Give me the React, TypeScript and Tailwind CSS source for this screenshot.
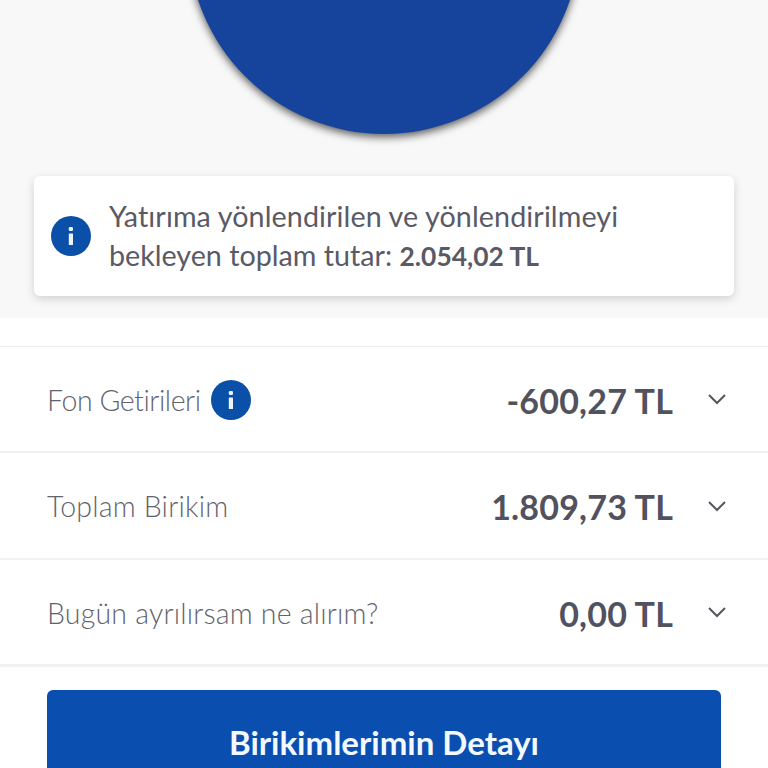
const FONT = "font-['Lato','Noto_Sans',sans-serif]";

function InfoDot({ size }: { size: string }) {
  return (
    <span className={`flex shrink-0 items-center justify-center rounded-full bg-[#0a4fa8] ${size}`}>
      <svg width="8" height="20" viewBox="0 0 8 20" fill="#eaf4ff">
        <rect x="1.8" y="1" width="4.2" height="4" rx="1.2" />
        <rect x="1.8" y="7.5" width="4.2" height="11.5" rx="0.6" />
      </svg>
    </span>
  );
}

function Chevron() {
  return (
    <svg width="18" height="12" viewBox="0 0 18 12" fill="none" stroke="#55555f" strokeWidth="2" className="ml-[35px] mr-[42px] shrink-0">
      <path d="M1 2l8 8 8-8" />
    </svg>
  );
}

const ROWS = [
  { label: 'Fon Getirileri', value: '-600,27 TL', info: true, height: 'h-[106px]', tracking: 'tracking-[-0.45px]', nudge: 'pt-[2px]' },
  { label: 'Toplam Birikim', value: '1.809,73 TL', info: false, height: 'h-[107px]', tracking: 'tracking-[0.2px]', nudge: 'pt-[2px]' },
  { label: 'Bugün ayrılırsam ne alırım?', value: '0,00 TL', info: false, height: 'h-[107px]', tracking: 'tracking-[0.2px]', nudge: 'pt-[3px]' }
];

export default function App() {
  return (
    <div className={`h-[768px] w-[768px] overflow-hidden bg-white ${FONT}`}>
      <section className="flow-root h-[318px] bg-[#f8f8f8]">
        <div className="mx-auto mt-[-258px] mb-[42px] h-[392px] w-[392px] rounded-full bg-[#16439b] shadow-[0_3px_8px_rgba(0,0,0,0.65)]" />
        <div className="mx-[34px] flex h-[120px] items-center gap-[18px] rounded-md bg-white pl-[17px] shadow-[0_3px_10px_rgba(0,0,0,0.16)]">
          <InfoDot size="h-10 w-10" />
          <p className="text-[28.7px] leading-[39px] tracking-[0.1px] text-[#5a5a66]">
            Yatırıma yönlendirilen ve yönlendirilmeyi
            <br />
            <span className="tracking-[0px]">bekleyen toplam tutar: </span>
            <b className="text-[26.4px] font-bold tracking-[0px]">2.054,02 TL</b>
          </p>
        </div>
      </section>

      <div className="h-[28px]" />

      <div className="border-t border-[#eeeeee]">
        {ROWS.map((row, i) => (
          <div
            key={row.label}
            className={`flex items-center border-b-2 border-[#f1f1f2] pl-[47px] ${row.height} ${i === 2 ? 'border-b-[3px]' : ''}`}
          >
            <span className={`text-[28.5px] font-light text-[#63636d] ${row.nudge} ${row.tracking}`}>{row.label}</span>
            {row.info && <span className="ml-[10px] pt-[2px]"><InfoDot size="h-10 w-10" /></span>}
            <span className="ml-auto pt-[2px] text-[34px] font-bold tracking-[0.2px] text-[#52525f]">{row.value}</span>
            <Chevron />
          </div>
        ))}
      </div>

      <div className="px-[47px] pt-[23px]">
        <button className="flex h-[110px] w-full justify-center rounded-md bg-[#0a4fb0] pt-[29px] text-[33px] leading-[46px] font-bold text-[#f2f9ff]">
          Birikimlerimin Detayı
        </button>
      </div>
    </div>
  );
}
